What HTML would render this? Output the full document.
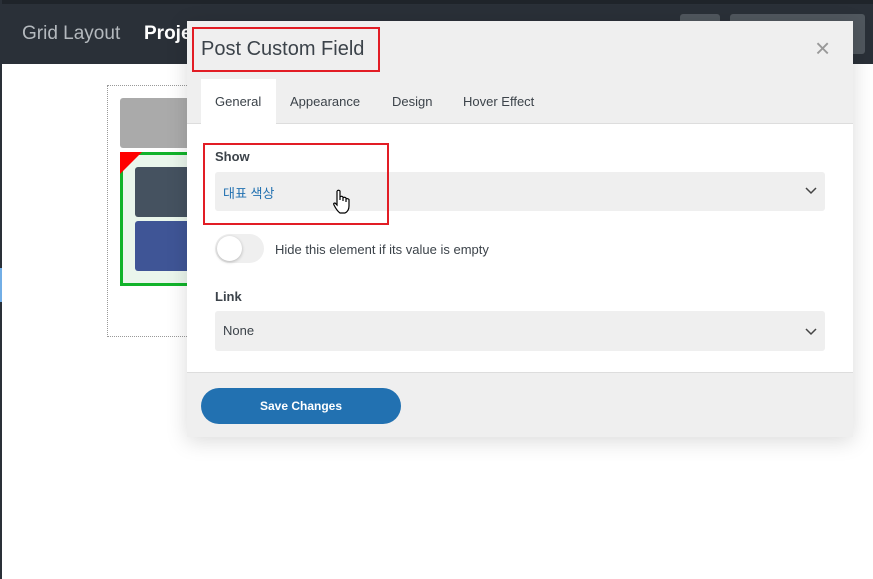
<!DOCTYPE html>
<html><head><meta charset="utf-8"><style>
*{margin:0;padding:0;box-sizing:border-box}
body{width:873px;height:579px;overflow:hidden;background:#fff;position:relative;font-family:"Liberation Sans","Noto Sans CJK KR",sans-serif}
.a{position:absolute}
</style></head><body>
<div class="a" style="left:0;top:0;width:873px;height:64px;background:#2a3038"></div>
<div class="a" style="left:0;top:0;width:873px;height:4px;background:#1f242a"></div>
<div class="a" style="left:0;top:0;width:2px;height:579px;background:#2a3038"></div>
<div class="a" style="left:0;top:268px;width:2px;height:34px;background:#72aee6"></div>
<div class="a" style="left:22px;top:23px;color:#b4b9be;font-size:19px">Grid Layout</div>
<div class="a" style="left:144px;top:23px;color:#fff;font-size:19px;font-weight:bold">Project</div>
<div class="a" style="left:680px;top:14px;width:40px;height:40px;background:#50575e;border-radius:3px"></div>
<div class="a" style="left:730px;top:14px;width:135px;height:40px;background:#50575e;border-radius:3px"></div>
<div class="a" style="left:107px;top:85px;width:100px;height:252px;border:1px dotted #999"></div>
<div class="a" style="left:120px;top:98px;width:80px;height:50px;background:#aaa;border-radius:3px"></div>
<div class="a" style="left:120px;top:152px;width:80px;height:134px;border:3px solid #11b32a;background:#eaf6ec"></div>
<div class="a" style="left:120px;top:152px;width:0;height:0;border-top:22px solid #f00;border-right:22px solid transparent"></div>
<div class="a" style="left:135px;top:167px;width:60px;height:50px;background:#455260;border-radius:3px"></div>
<div class="a" style="left:135px;top:221px;width:60px;height:50px;background:#3f5596;border-radius:3px"></div>
<div class="a" style="left:187px;top:21px;width:666px;height:416px;background:#efefef;box-shadow:0 4px 20px rgba(0,0,0,.15)">
 <div class="a" style="left:5px;top:6px;width:188px;height:45px;border:2px solid #e21d25"></div>
 <div class="a" style="left:14px;top:17px;font-size:20px;color:#3c434a">Post Custom Field</div>
 <div class="a" style="left:628px;top:14px;font-size:26px;color:#999;line-height:1">×</div>
 <div class="a" style="left:0;top:102px;width:666px;height:1px;background:#ddd"></div>
 <div class="a" style="left:14px;top:58px;width:75px;height:45px;background:#fff"></div>
 <div class="a" style="left:28px;top:73px;font-size:13px;color:#3c434a">General</div>
 <div class="a" style="left:103px;top:73px;font-size:13px;color:#3c434a">Appearance</div>
 <div class="a" style="left:205px;top:73px;font-size:13px;color:#3c434a">Design</div>
 <div class="a" style="left:276px;top:73px;font-size:13px;color:#3c434a">Hover Effect</div>
 <div class="a" style="left:0;top:103px;width:666px;height:249px;background:#fff;border-bottom:1px solid #ddd"></div>
 <div class="a" style="left:28px;top:128px;font-size:13px;font-weight:bold;color:#3c434a">Show</div>
 <div class="a" style="left:28px;top:151px;width:610px;height:39px;background:#efefef;border-radius:3px"></div>
 <div class="a" style="left:36px;top:162px;font-size:13px;color:#2271b1">대표 색상</div>
 <svg class="a" style="left:145px;top:168px" width="18" height="26" viewBox="0 0 18 26"><path d="M5 2 Q6.5 0.5 8 2 V11 M8 8 Q9.5 6.5 11 8 V12 M11 9 Q12.5 7.5 14 9 V13 M14 10 Q15.5 9 17 10.5 V17 Q17 22 13 24 H8 Q5 22 2 16 Q1 14 3 14 L5 16 V2" fill="#fff" stroke="#000" stroke-width="1.2"/></svg>
 <svg class="a" style="left:618px;top:166px" width="12" height="8"><path d="M1 1 L6 6 L11 1" fill="none" stroke="#444" stroke-width="1.5"/></svg>
 <div class="a" style="left:16px;top:122px;width:186px;height:82px;border:2px solid #e21d25"></div>
 <div class="a" style="left:28px;top:213px;width:49px;height:29px;background:#efefef;border-radius:15px"></div>
 <div class="a" style="left:30px;top:215px;width:25px;height:25px;background:#fff;border-radius:50%;box-shadow:0 1px 3px rgba(0,0,0,.25)"></div>
 <div class="a" style="left:88px;top:221px;font-size:13px;color:#3c434a">Hide this element if its value is empty</div>
 <div class="a" style="left:28px;top:268px;font-size:13px;font-weight:bold;color:#3c434a">Link</div>
 <div class="a" style="left:28px;top:290px;width:610px;height:40px;background:#efefef;border-radius:3px"></div>
 <div class="a" style="left:36px;top:302px;font-size:13px;color:#3c434a">None</div>
 <svg class="a" style="left:618px;top:307px" width="12" height="8"><path d="M1 1 L6 6 L11 1" fill="none" stroke="#444" stroke-width="1.5"/></svg>
 <div class="a" style="left:14px;top:367px;width:200px;height:36px;background:#2271b1;border-radius:18px;color:#fff;font-size:12px;font-weight:bold;text-align:center;line-height:36px">Save Changes</div>
</div>
</body></html>
